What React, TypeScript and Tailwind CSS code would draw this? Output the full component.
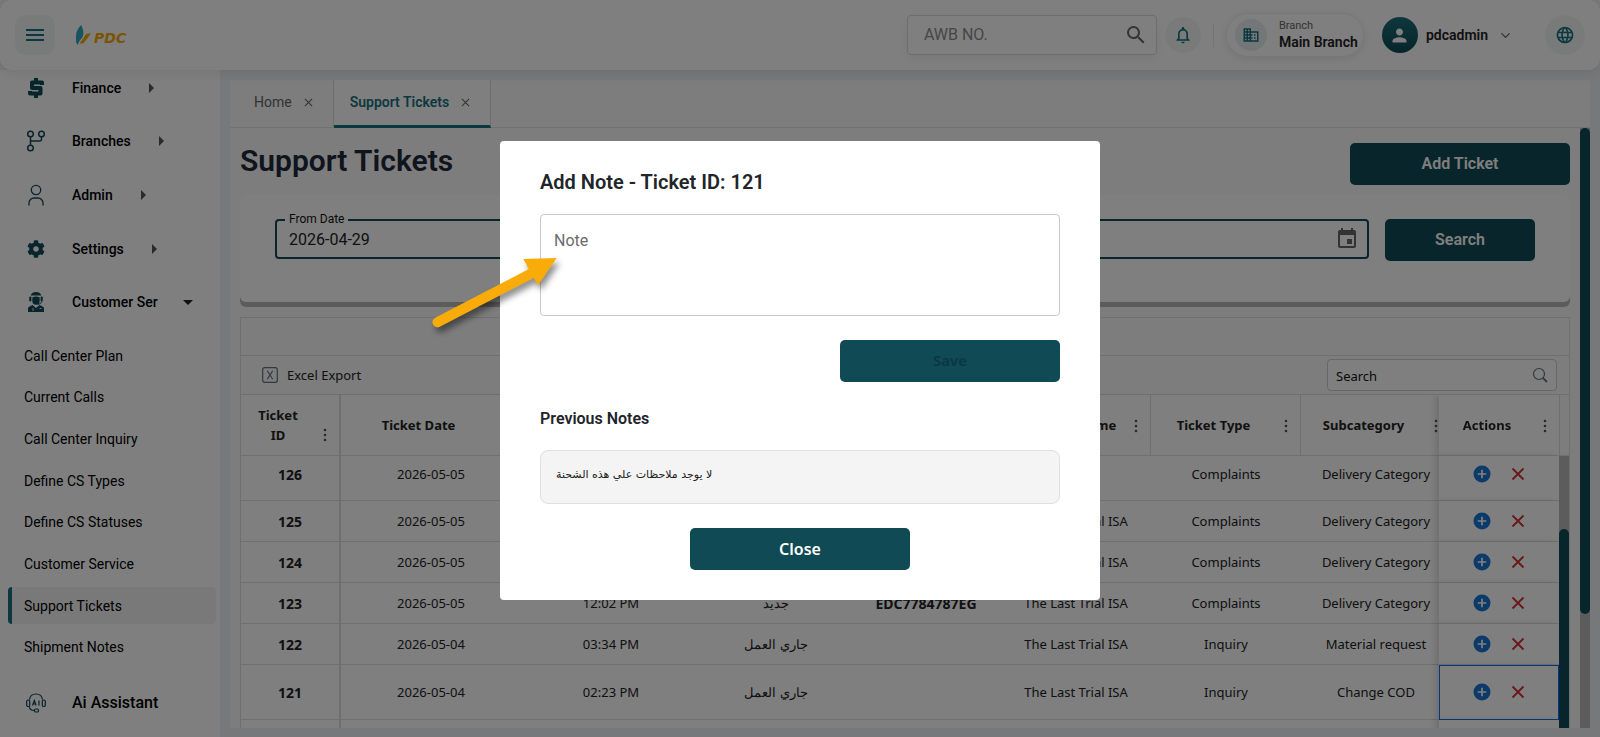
import { ChevronDown } from "lucide-react";
import {
  MdMenu,
  MdSearch,
  MdNotificationsNone,
  MdBusiness,
  MdPerson,
  MdLanguage,
  MdInsertInvitation,
  MdArrowRight,
  MdArrowDropDown,
} from "react-icons/md";
import { FaCog } from "react-icons/fa";

const DollarIcon = () => (
  <svg width="20" height="20" viewBox="0 0 20 20" fill="none" stroke="#0f4a55" strokeWidth="4">
    <path d="M16 7V4.500H6v5.500h8.500v5.500H4V13" strokeLinejoin="round" />
    <path d="M10 0v4M10 16v4" />
  </svg>
);

const BranchIcon = () => (
  <svg width="20" height="22" viewBox="0 0 20 22" fill="none" stroke="#0f4a55" strokeWidth="1.500">
    <circle cx="4.500" cy="4" r="2.800" />
    <circle cx="15.500" cy="4" r="2.800" />
    <circle cx="4.500" cy="18" r="2.800" />
    <path d="M4.500 7v8M15.500 7v2.500a1.500 1.500 0 0 1-1.500 1.500H4.500" />
  </svg>
);

const AdminIcon = () => (
  <svg width="20" height="22" viewBox="0 0 20 22" fill="none" stroke="#0f4a55" strokeWidth="1.300">
    <circle cx="10" cy="6" r="4.700" />
    <path d="M3 21.500v-2.500a5 5 0 0 1 5-5h4a5 5 0 0 1 5 5v2.500" />
  </svg>
);

const AgentIcon = () => (
  <svg width="20" height="22" viewBox="0 0 20 22" fill="#0f4a55">
    <path d="M4.500 4.500C5.500 2 7.500 1 10 1s4.500 1 5.500 3.500z" />
    <rect x="3.200" y="5.500" width="2.200" height="5" rx="1" />
    <rect x="14.600" y="5.500" width="2.200" height="5" rx="1" />
    <path d="M6.300 6.500c2-1.200 5.400-1.200 7.400 0V10a3.700 3.700 0 0 1-7.400 0z" />
    <path d="M15.700 10.500c-.5 2-2 2.700-4 2.800" fill="none" stroke="#0f4a55" />
    <path d="M2 21v-3.500C2 15.500 4.500 15 6.500 14l3.500 3 3.500-3c2 1 4.500 1.500 4.500 3.500V21z" />
    <path d="M7 17v3M13.500 17.500h2" fill="none" stroke="#fff" strokeWidth="0.800" />
  </svg>
);

const AiIcon = () => (
  <svg width="20" height="20" viewBox="0 0 20 20" fill="none" stroke="#0f4a55" strokeWidth="1.200">
    <path d="M3.500 6.500C4 2.500 6.500 1 10 1s6 1.500 6.500 5.500" />
    <rect x="0.700" y="7" width="3" height="6.500" rx="1.300" />
    <rect x="16.300" y="7" width="3" height="6.500" rx="1.300" />
    <path d="M3.500 13.500c0 3 2 4 5 4" />
    <rect x="8.500" y="16" width="4" height="3" rx="1.300" />
    <path d="M6.500 12.500l1.800-5 1.800 5M7 11h2.600M13 7.500v5" />
  </svg>
);

const CloseIcon = () => (
  <svg width="9" height="9" viewBox="0 0 10 10" stroke="#666" strokeWidth="1.200">
    <path d="M1 1l8 8M9 1l-8 8" />
  </svg>
);

const menu = [
  { label: "Finance", icon: <DollarIcon /> },
  { label: "Branches", icon: <BranchIcon /> },
  { label: "Admin", icon: <AdminIcon /> },
  { label: "Settings", icon: <FaCog size={18} color="#0f4a55" /> },
  { label: "Customer Ser", icon: <AgentIcon />, open: true },
];

const subMenu = [
  "Call Center Plan",
  "Current Calls",
  "Call Center Inquiry",
  "Define CS Types",
  "Define CS Statuses",
  "Customer Service",
  "Support Tickets",
  "Shipment Notes",
];

const columns = [
  { field: "date", title: "Ticket Date", width: "w-[180px]" },
  { field: "time", title: "", width: "w-[180px]" },
  { field: "status", title: "", width: "w-[150px]" },
  { field: "awb", title: "", width: "w-[150px]" },
  { field: "client", title: "Customer Name", width: "w-[150px]" },
  { field: "type", title: "Ticket Type", width: "w-[150px]" },
  { field: "sub", title: "Subcategory", width: "w-[150px]" },
];

const tickets = [
  { id: 126, date: "2026-05-05", time: "", status: "", awb: "", client: "", type: "Complaints", sub: "Delivery Category", row: "h-[45px] [&>td]:pb-2" },
  { id: 125, date: "2026-05-05", time: "", status: "", awb: "", client: "The Last Trial ISA", type: "Complaints", sub: "Delivery Category", row: "h-[41px]" },
  { id: 124, date: "2026-05-05", time: "", status: "", awb: "", client: "The Last Trial ISA", type: "Complaints", sub: "Delivery Category", row: "h-[41px]" },
  { id: 123, date: "2026-05-05", time: "12:02 PM", status: "جديد", awb: "EDC7784787EG", client: "The Last Trial ISA", type: "Complaints", sub: "Delivery Category", row: "h-[41px]" },
  { id: 122, date: "2026-05-04", time: "03:34 PM", status: "جاري العمل", awb: "", client: "The Last Trial ISA", type: "Inquiry", sub: "Material request", row: "h-[41px]" },
  { id: 121, date: "2026-05-04", time: "02:23 PM", status: "جاري العمل", awb: "", client: "The Last Trial ISA", type: "Inquiry", sub: "Change COD", row: "h-[55px]", selected: true },
];

const Logo = () => (
  <a href="#" aria-label="PDC" className="flex items-center">
    <svg width="15" height="20" viewBox="0 0 15 20">
      <path d="M5 0C1.500 3.500 0 7 0 11.500V17l1.500 3 2-4 3-4C8 9 7.500 4 5 0z" fill="#2fa9bd" />
      <path d="M3.500 18.500 9.500 10c.7-1 1.500-1.500 2.500-1.500h3L8.500 17c-.8 1-1.500 1.500-3 1.500z" fill="#f5a800" />
    </svg>
    <span className="mt-[5px] ml-[3px] font-['DejaVu_Sans'] text-sm leading-4 font-bold text-[#f5a800] italic">PDC</span>
  </a>
);

const Header = () => (
  <header className="relative z-10 flex h-[70px] items-center rounded-xl bg-white pr-[15px] pl-[15px] shadow-[0_4px_12px_rgba(0,0,0,0.08)]">
    <button aria-label="Menu" className="mr-[21px] flex size-10 items-center justify-center rounded-[10px] bg-[#f3f7f7] text-[#17727f]">
      <MdMenu size={24} />
    </button>
    <Logo />
    <div className="ml-auto flex h-10 w-[250px] items-center rounded border border-[#dadada] pr-2 pl-4 shadow-[0_4px_12px_rgba(0,0,0,0.06)]">
      <input aria-label="AWB number" placeholder="AWB NO." className="min-w-0 flex-1 text-base placeholder:text-[#8c8c8c] focus:outline-none" />
      <MdSearch size={24} color="#666" />
    </div>
    <button aria-label="Notifications" className="ml-2 flex size-9 items-center justify-center rounded-full bg-[#f3f7f7] text-[#17727f]">
      <MdNotificationsNone size={20} />
    </button>
    <div className="ml-3 h-6 w-px bg-[#e8e8e8]" />
    <div className="ml-3 flex h-11 w-[138px] items-center rounded-full border border-[#f0f0f0] pl-2 shadow-[0_2px_8px_rgba(0,0,0,0.1)]">
      <span className="flex size-8 shrink-0 items-center justify-center rounded-full bg-[#e6eef0] text-[#17727f]">
        <MdBusiness size={18} />
      </span>
      <div className="ml-3 pb-[2px] whitespace-nowrap">
        <div className="text-[11px] leading-4 text-[#666]">Branch</div>
        <div className="text-sm leading-4 font-semibold text-[#222]">Main Branch</div>
      </div>
    </div>
    <button className="ml-[18px] flex items-center text-sm font-semibold text-[#222]">
      <span className="mr-2 flex size-9 items-center justify-center rounded-full bg-linear-to-b from-[#1b6f7c] to-[#0f4a55] text-white">
        <MdPerson size={21} />
      </span>
      pdcadmin
      <ChevronDown size={15} className="ml-[10px] text-[#666]" />
    </button>
    <button aria-label="Language" className="ml-8 flex size-10 items-center justify-center rounded-full bg-[#f3f7f7] text-[#17727f]">
      <MdLanguage size={20} />
    </button>
  </header>
);

const Sidebar = () => (
  <aside className="w-[220px] shrink-0 overflow-hidden bg-white text-black">
    <nav className="-mt-[9px]">
      <div className="grid h-[268px] auto-rows-fr">
        {menu.map((item) => (
          <a key={item.label} href="#" className="flex items-center text-sm font-medium">
            <span className="ml-[25px] flex w-[22px] justify-center">{item.icon}</span>
            <span className="ml-[25px]">{item.label}</span>
            {item.open ? (
              <MdArrowDropDown size={24} className="ml-[18px] text-[#222]" />
            ) : (
              <MdArrowRight size={24} className="ml-[18px] text-[#555]" />
            )}
          </a>
        ))}
      </div>
      <div className="mt-[6px] grid h-[333px] auto-rows-fr text-sm">
        {subMenu.map((label) => (
          <div key={label} className="flex items-center pr-1 pl-2">
            <a
              href="#"
              className={
                label === "Support Tickets"
                  ? "flex h-[37px] w-full items-center rounded border-l-4 border-[#17727f] bg-[#f3f3f3] pl-3"
                  : "flex h-[37px] w-full items-center pl-4"
              }
            >
              {label}
            </a>
          </div>
        ))}
      </div>
      <a href="#" className="mt-2 flex h-[54px] items-center text-base font-medium">
        <span className="ml-[25px] flex w-[22px] justify-center">
          <AiIcon />
        </span>
        <span className="ml-[25px]">Ai Assistant</span>
      </a>
    </nav>
  </aside>
);

const Tabs = () => (
  <div className="flex h-12 border-b border-[#e4e4e4] bg-[#fafafa]">
    <div className="flex items-center border-r border-[#dcdcdc] pr-5 pb-[3px] pl-6 text-sm text-[#666]">
      <a href="#">Home</a>
      <button aria-label="Close Home" className="ml-3">
        <CloseIcon />
      </button>
    </div>
    <div className="-mb-px flex items-center border-r border-b-3 border-r-[#dcdcdc] border-b-[#17727f] bg-white pr-5 pb-px pl-4 text-sm font-semibold text-[#17727f]">
      <a href="#">Support Tickets</a>
      <button aria-label="Close Support Tickets" className="ml-3">
        <CloseIcon />
      </button>
    </div>
  </div>
);

const DateField = ({ id, label, value }: { id: string; label: string; value: string }) => (
  <div className="relative flex h-10 flex-1 items-center rounded border-2 border-[#0f4a55] pr-2 pl-3">
    <label htmlFor={id} className="absolute -top-[10px] left-2 bg-white px-1 text-xs leading-4 text-[#111]">
      {label}
    </label>
    <input id={id} defaultValue={value} className="min-w-0 flex-1 pt-[2px] text-base text-[#222] focus:outline-none" />
    <MdInsertInvitation size={24} color="#666" />
  </div>
);

const Kebab = () => (
  <svg width="4" height="14" viewBox="0 0 4 14" fill="#555">
    <circle cx="2" cy="2" r="1.300" />
    <circle cx="2" cy="7" r="1.300" />
    <circle cx="2" cy="12" r="1.300" />
  </svg>
);

const TicketTable = () => (
  <section className="mt-[10px] border border-b-0 border-[#dfdfdf] font-['Noto_Sans'] text-[13px] text-[#222]">
    <div className="h-[38px] border-b border-[#dfdfdf]" />
    <div className="flex h-[39px] items-center border-b border-[#dfdfdf] pr-3 pl-[21px]">
      <button className="flex items-center">
        <svg width="16" height="16" viewBox="0 0 16 16" fill="none" stroke="#666f80" strokeWidth="1.200">
          <rect x="0.700" y="0.700" width="14.600" height="14.600" rx="2" />
          <path d="M5.300 3.800l5.400 8.400M10.700 3.800l-5.400 8.400" />
        </svg>
        <span className="ml-[9px] pt-[2px]">Excel Export</span>
      </button>
      <div className="ml-auto flex h-8 w-[230px] items-center rounded border border-[#cfcfcf] bg-white px-2">
        <input aria-label="Search tickets" placeholder="Search" className="min-w-0 flex-1 pt-[3px] placeholder:text-[#111] focus:outline-none" />
        <svg width="16" height="16" viewBox="0 0 16 16" fill="none" stroke="#666f80" strokeWidth="1.200">
          <circle cx="7" cy="7" r="5.500" />
          <path d="M11 11l4 4" strokeWidth="1.800" />
        </svg>
      </div>
    </div>
    <div className="flex">
      <div className="min-w-0 flex-1 overflow-hidden">
        <table className="w-full min-w-[1330px] table-fixed border-separate border-spacing-0 bg-white text-center [&_td]:border-b [&_td]:border-[#dfdfdf] [&_th]:border-b [&_th]:border-[#dfdfdf]">
          <thead>
            <tr className="h-[61px]">
              <th className="w-[100px] border-r-2 pr-3 pl-2">
                <div className="flex items-center justify-between">
                  <span className="w-[58px] px-1 leading-5">
                    Ticket
                    <br />
                    ID
                  </span>
                  <span className="pt-5">
                    <Kebab />
                  </span>
                </div>
              </th>
              {columns.map((col) => (
                <th key={col.field} className={`${col.width} border-r pt-[2px] pr-3`}>
                  <div className="flex items-center">
                    <span className="flex-1 pr-2">{col.title}</span>
                    <Kebab />
                  </div>
                </th>
              ))}
              <th className="sticky right-0 w-[120px] bg-white pt-[2px] pr-3 shadow-[-4px_0_6px_rgba(0,0,0,0.12)]">
                <div className="flex items-center">
                  <span className="flex-1 pr-2">Actions</span>
                  <Kebab />
                </div>
              </th>
            </tr>
          </thead>
          <tbody>
            {tickets.map((t) => (
              <tr key={t.id} className={`${t.row} [&>td:not(:last-child)]:pt-[2px]`}>
                <td className="border-r-2 text-sm font-bold">{t.id}</td>
                <td>{t.date}</td>
                <td>{t.time}</td>
                <td>{t.status}</td>
                <td className="text-sm font-bold">{t.awb}</td>
                <td>{t.client}</td>
                <td>{t.type}</td>
                <td>{t.sub}</td>
                <td
                  className={`sticky right-0 bg-white shadow-[-4px_0_6px_rgba(0,0,0,0.12)] ${t.selected ? "outline-1 -outline-offset-1 outline-[#0d6efd]" : ""}`}
                >
                  <div className="flex items-center justify-center gap-5">
                    <button aria-label="Add note">
                      <svg width="18" height="18" viewBox="0 0 18 18">
                        <circle cx="9" cy="9" r="8.500" fill="#1976d2" />
                        <path d="M9 4.700v8.600M4.700 9h8.600" stroke="#fff" strokeWidth="1.700" />
                      </svg>
                    </button>
                    <button aria-label="Delete ticket">
                      <svg width="14" height="14" viewBox="0 0 14 14" stroke="#d32f2f" strokeWidth="1.800">
                        <path d="M1.500 1.500l11 11M12.500 1.500l-11 11" />
                      </svg>
                    </button>
                  </div>
                </td>
              </tr>
            ))}
            <tr className="h-[55px]">
              <td className="border-r-2" />
              <td colSpan={7} />
              <td className="sticky right-0 bg-white shadow-[-4px_0_6px_rgba(0,0,0,0.12)]" />
            </tr>
          </tbody>
        </table>
      </div>
      <div className="flex w-[10px] flex-col">
        <div className="h-[61px] border-b border-l border-[#dfdfdf]" />
        <div className="flex-1 bg-[#b8b8b8] pt-[73px]">
          <div className="h-full rounded-full bg-[#0f4a55]" />
        </div>
      </div>
    </div>
  </section>
);

const TicketsPage = () => (
  <main className="flex min-w-0 flex-1 flex-col bg-[#eef1f5] p-[10px] pb-[9px]">
    <Tabs />
    <div className="flex min-h-0 flex-1">
      <div className="min-w-0 flex-1 overflow-hidden bg-[#fafafa] px-[10px] pt-[15px]">
        <div className="flex items-start justify-between">
          <h1 className="text-[30px] leading-9 font-semibold text-[#1e293b]">Support Tickets</h1>
          <button className="h-[42px] w-[220px] rounded-[5px] bg-[#0f4a55] text-base font-semibold text-white">Add Ticket</button>
        </div>
        <form className="mt-[10px] mb-[15px] flex h-[107px] items-start rounded-md bg-white px-[35px] pt-6 shadow-[0_5px_0_#b8b8b8]">
          <div className="flex flex-1 gap-4">
            <DateField id="from" label="From Date" value="2026-04-29" />
            <DateField id="to" label="To Date" value="2026-05-06" />
          </div>
          <button type="button" className="ml-4 h-[42px] w-[150px] rounded-[5px] bg-[#0f4a55] text-base font-semibold text-white">
            Search
          </button>
        </form>
        <TicketTable />
      </div>
      <div className="w-[10px] bg-[#b8b8b8]">
        <div className="h-[81%] rounded-full bg-[#0f4a55]" />
      </div>
    </div>
  </main>
);

const NoteDialog = () => (
  <div className="fixed inset-0 z-20 flex items-center justify-center bg-black/50">
    <div role="dialog" aria-labelledby="note-title" className="mt-[3px] w-[600px] rounded bg-white px-10 pt-[27px] pb-[30px]">
      <h2 id="note-title" className="text-xl leading-7 font-semibold text-[#212529]">Add Note - Ticket ID: 121</h2>
      <textarea
        aria-label="Note"
        placeholder="Note"
        className="mt-[18px] block h-[102px] w-full resize-none rounded border border-[#c8c8c8] px-[13px] py-[14px] text-base text-[#222] placeholder:text-[#6b6b6b]"
      />
      <div className="mt-6 flex justify-end">
        <button disabled className="h-[42px] w-[220px] rounded-[5px] bg-[#0f4a55] font-['Noto_Sans'] text-[15px] font-semibold text-[#0b3740]">
          Save
        </button>
      </div>
      <h3 className="mt-[25px] text-base leading-6 font-semibold text-[#212529]">Previous Notes</h3>
      <div className="mt-[19px] h-[54px] rounded-lg border border-[#e0e0e0] bg-[#f4f4f4] px-[15px] py-[14px] font-['DejaVu_Sans'] text-[11px] leading-5 text-[#222]">
        لا يوجد ملاحظات علي هذه الشحنة
      </div>
      <div className="mt-6 flex justify-center">
        <button className="h-[42px] w-[220px] rounded-[5px] bg-[#0f4a55] font-['Noto_Sans'] text-base font-semibold text-white">Close</button>
      </div>
    </div>
  </div>
);

// pointer drawn over the dialog edge, towards the note field
const Pointer = () => (
  <svg
    width="140"
    height="90"
    viewBox="0 0 140 90"
    className="pointer-events-none fixed top-[250px] left-[calc(50%-370px)] z-30 drop-shadow-[3px_5px_3px_rgba(0,0,0,0.45)]"
  >
    <path d="M7.500 72.300 106 21" stroke="#f9ac09" strokeWidth="10" strokeLinecap="round" />
    <path d="M126.700 8 93.300 9l14.700 26.300z" fill="#f9ac09" />
  </svg>
);

export default function App() {
  return (
    <div className="flex h-screen flex-col overflow-hidden bg-[#eef1f5] font-[Roboto,sans-serif]">
      <Header />
      <div className="flex min-h-0 flex-1">
        <Sidebar />
        <TicketsPage />
      </div>
      <NoteDialog />
      <Pointer />
    </div>
  );
}
